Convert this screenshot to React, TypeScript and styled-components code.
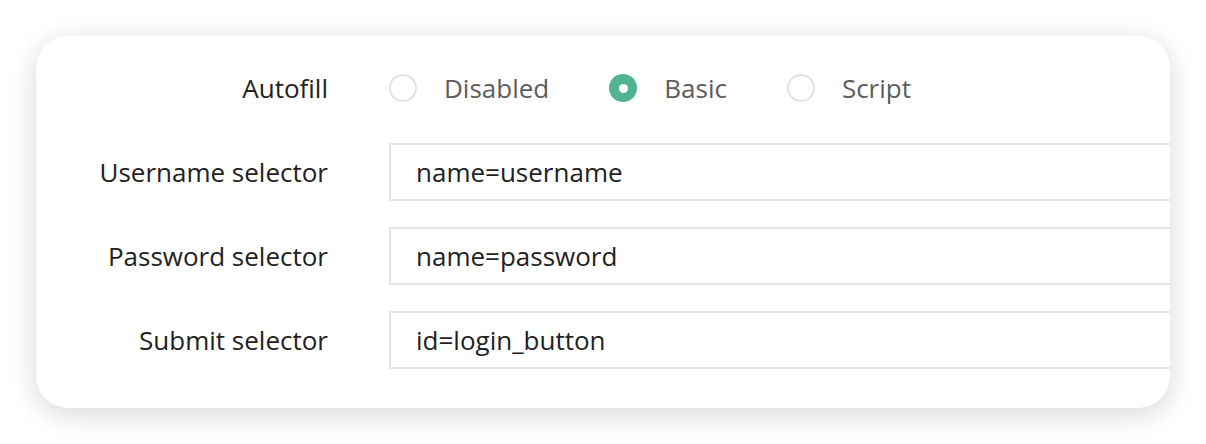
import React, { useState } from 'react'
import styled, { createGlobalStyle } from 'styled-components'

const GlobalStyle = createGlobalStyle`
  html, body {
    margin: 0;
    padding: 0;
    background: #ffffff;
    font-family: "Open Sans", "Noto Sans", sans-serif;
  }
`

const Page = styled.div`
  width: 1206px;
  height: 444px;
  padding: 36px 0 0 36px;
  box-sizing: border-box;
`

const Card = styled.div`
  width: 1134px;
  height: 372px;
  box-sizing: border-box;
  background: #fff;
  border-radius: 32px;
  box-shadow: 0 6px 28px rgba(0, 0, 0, 0.16);
  overflow: hidden;
  padding: 23px 0 0 0;
  display: grid;
  grid-template-columns: 292px 1fr;
  grid-auto-rows: 58px;
  column-gap: 61px;
  row-gap: 26px;
`

const Label = styled.div`
  display: flex;
  align-items: center;
  justify-content: flex-end;
  font-size: 26px;
  color: #222;
`

const RadioGroup = styled.div`
  display: flex;
  align-items: center;
  gap: 60px;
`

const Option = styled.label`
  display: flex;
  align-items: center;
  gap: 26px;
  font-size: 26px;
  color: #5c5c5c;
  cursor: pointer;
`

const Circle = styled.span<{ $checked: boolean }>`
  width: 28px;
  height: 28px;
  margin-right: 1px;
  box-sizing: border-box;
  border-radius: 50%;
  border: ${p => (p.$checked ? 'none' : '2px solid #e2e2e8')};
  background: ${p => (p.$checked ? '#52b393' : '#fff')};
  display: flex;
  align-items: center;
  justify-content: center;

  &::after {
    content: '';
    display: ${p => (p.$checked ? 'block' : 'none')};
    width: 9px;
    height: 9px;
    border-radius: 50%;
    background: #fff;
  }
`

const Input = styled.input`
  height: 58px;
  box-sizing: border-box;
  margin-right: -20px;
  border: 2px solid #e4e4e4;
  padding: 0 25px;
  font-family: inherit;
  font-size: 26px;
  color: #222;
  outline: none;
  background: #fff;
`

const options = ['Disabled', 'Basic', 'Script']

const App = () => {
  const [mode, setMode] = useState('Basic')

  const fields = [
    { label: 'Username selector', value: 'name=username' },
    { label: 'Password selector', value: 'name=password' },
    { label: 'Submit selector', value: 'id=login_button' },
  ]

  return (
    <Page>
      <GlobalStyle />
      <Card>
        <Label>Autofill</Label>
        <RadioGroup>
          {options.map(o => (
            <Option key={o} onClick={() => setMode(o)}>
              <Circle $checked={mode === o} />
              {o}
            </Option>
          ))}
        </RadioGroup>
        {fields.map(f => (
          <React.Fragment key={f.label}>
            <Label>{f.label}</Label>
            <Input defaultValue={f.value} />
          </React.Fragment>
        ))}
      </Card>
    </Page>
  )
}

export default App
